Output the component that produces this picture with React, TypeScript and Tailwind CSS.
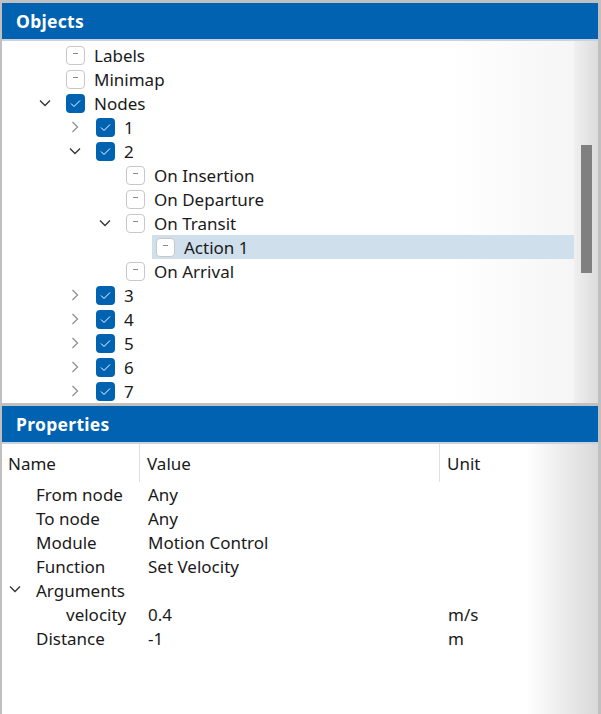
import React from 'react';

type Node = {
  label: string;
  level: number;
  checked?: boolean;
  expander?: 'open' | 'closed';
  selected?: boolean;
};

const treeRows: Node[] = [
  { label: 'Labels', level: 0 },
  { label: 'Minimap', level: 0 },
  { label: 'Nodes', level: 0, checked: true, expander: 'open' },
  { label: '1', level: 1, checked: true, expander: 'closed' },
  { label: '2', level: 1, checked: true, expander: 'open' },
  { label: 'On Insertion', level: 2 },
  { label: 'On Departure', level: 2 },
  { label: 'On Transit', level: 2, expander: 'open' },
  { label: 'Action 1', level: 3, selected: true },
  { label: 'On Arrival', level: 2 },
  { label: '3', level: 1, checked: true, expander: 'closed' },
  { label: '4', level: 1, checked: true, expander: 'closed' },
  { label: '5', level: 1, checked: true, expander: 'closed' },
  { label: '6', level: 1, checked: true, expander: 'closed' },
  { label: '7', level: 1, checked: true, expander: 'closed' },
];

const props = [
  { name: 'From node', value: 'Any', unit: '', indent: 1 },
  { name: 'To node', value: 'Any', unit: '', indent: 1 },
  { name: 'Module', value: 'Motion Control', unit: '', indent: 1 },
  { name: 'Function', value: 'Set Velocity', unit: '', indent: 1 },
  { name: 'Arguments', value: '', unit: '', indent: 1, open: true },
  { name: 'velocity', value: '0.4', unit: 'm/s', indent: 2 },
  { name: 'Distance', value: '-1', unit: 'm', indent: 1 },
];

const Chevron = ({ open }: { open: boolean }) =>
  open ? (
    <svg width="14" height="14" viewBox="0 0 14 14" className="text-[#333]">
      <path d="M2 4.5 L7 9.5 L12 4.5" fill="none" stroke="currentColor" strokeWidth="1.3" />
    </svg>
  ) : (
    <svg width="14" height="14" viewBox="0 0 14 14" className="text-[#909090]">
      <path d="M4.5 2 L9.5 7 L4.5 12" fill="none" stroke="currentColor" strokeWidth="1.3" />
    </svg>
  );

const Check = ({ checked }: { checked?: boolean }) =>
  checked ? (
    <div className="w-[19px] h-[19px] rounded-[4px] bg-[#0063b1] flex items-center justify-center">
      <svg width="11" height="9" viewBox="0 0 11 9">
        <path d="M1 4.5 L4 7.5 L10 1.5" fill="none" stroke="white" strokeWidth="1" />
      </svg>
    </div>
  ) : (
    <div className="w-[19px] h-[19px] rounded-[4px] border border-[#c8c8c8] bg-white flex items-center justify-center">
      <div className="w-[5px] h-[1.5px] bg-[#8a8a8a] -mt-[3px]" />
    </div>
  );

const Header = ({ title }: { title: string }) => (
  <div className="h-[38px] bg-[#0062b0] border-b-2 border-[#c9d3dd] flex items-center pl-[14px] text-white font-bold text-[17.5px] tracking-[0.3px]">
    {title}
  </div>
);

export default function App() {
  return (
    <div
      className="w-[601px] h-[714px] bg-white flex flex-col border-l-2 border-r-[3px] border-t-[3px] border-[#c0c0c0] text-[#1a1a1a] text-[17px]"
      style={{ fontFamily: '"Noto Sans", "Open Sans", sans-serif' }}
    >
      <Header title="Objects" />
      <div className="h-[362px] flex bg-gradient-to-r from-white from-[75%] to-[#f4f4f4]">
        <div className="flex-1 pt-[2px] overflow-hidden">
          {treeRows.map((r) => (
            <div key={r.label} className="h-[24px] flex items-center" style={{ paddingLeft: 26 + r.level * 30 }}>
              <div className="w-[34px] shrink-0 flex items-center pl-[10px]">
                {r.expander && <Chevron open={r.expander === 'open'} />}
              </div>
              <div className={'flex items-center h-[24px] flex-1 pl-[4px] ' + (r.selected ? 'bg-[#cfdfec]' : '')}>
                <div className="w-[19px] mr-[9px]">
                  <Check checked={r.checked} />
                </div>
                <span className="leading-none">{r.label}</span>
              </div>
            </div>
          ))}
        </div>
        <div className="w-[24px] bg-gradient-to-r from-[#f0f0f0] to-[#dcdcdc] flex justify-center pt-[104px]">
          <div className="w-[11px] h-[128px] bg-[#808080]" />
        </div>
      </div>
      <div className="h-[3px] bg-[#c0c0c0]" />
      <Header title="Properties" />
      <div className="flex-1 bg-gradient-to-r from-white from-[88%] to-[#d9d9d9]">
        <div className="flex h-[38px]">
          <div className="w-[138px] h-full flex items-center pt-[2px] pl-[6px] border-r border-[#e0e0e0]">Name</div>
          <div className="w-[300px] h-full flex items-center pt-[2px] pl-[7px] border-r border-[#e0e0e0]">Value</div>
          <div className="flex-1 h-full flex items-center pt-[2px] pl-[7px]">Unit</div>
        </div>
        <div className="pt-[1px]">
          {props.map((p) => (
            <div key={p.name} className="h-[24px] flex items-center">
              <div className="w-[139px] flex items-center relative" style={{ paddingLeft: p.indent === 2 ? 64 : 34 }}>
                {p.open && (
                  <div className="absolute left-[6px] top-[4px]">
                    <Chevron open />
                  </div>
                )}
                {p.name}
              </div>
              <div className="w-[300px] pl-[7px]">{p.value}</div>
              <div className="flex-1 pl-[7px]">{p.unit}</div>
            </div>
          ))}
        </div>
      </div>
    </div>
  );
}
